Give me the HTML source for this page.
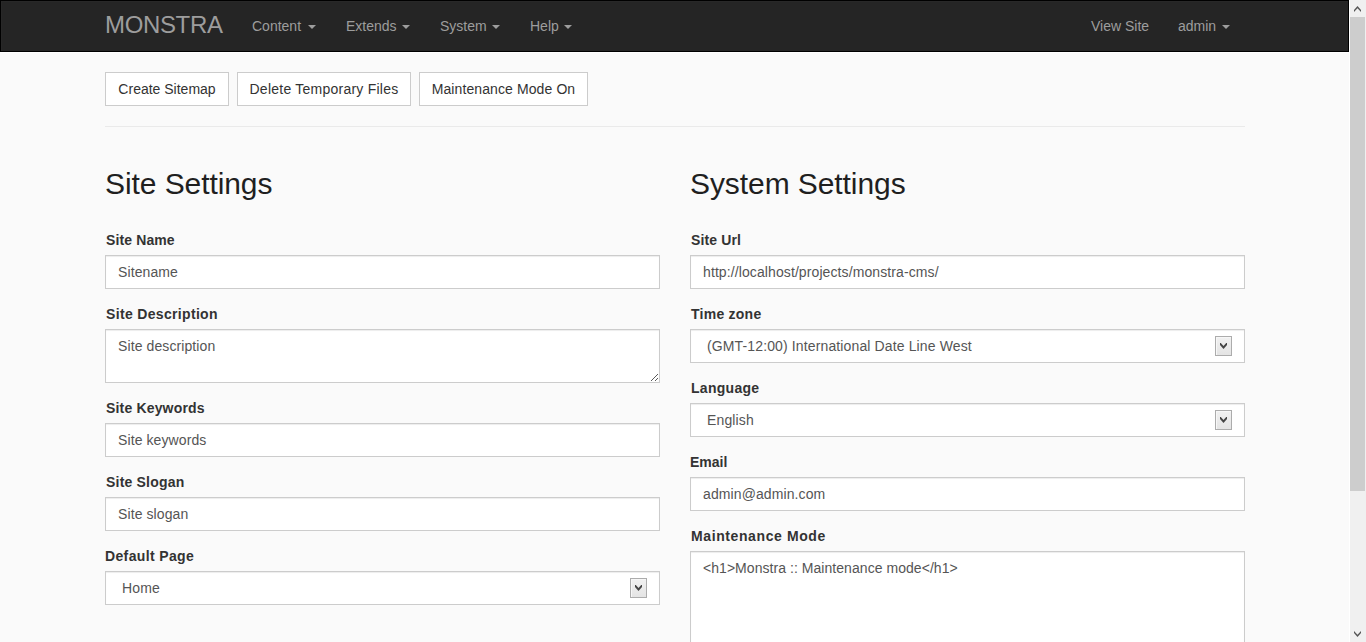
<!DOCTYPE html>
<html>
<head>
<meta charset="utf-8">
<style>
*{box-sizing:border-box;}
html,body{margin:0;padding:0;}
body{width:1366px;height:642px;overflow:hidden;background:#fff;font-family:"Liberation Sans",sans-serif;font-size:14px;line-height:20px;color:#333;position:relative;}
.page{position:absolute;left:0;top:53px;width:1349px;height:589px;background:#fafafa;}
.navbar{position:absolute;left:0;top:0;width:1349px;height:52px;background:#252525;border:1px solid #000;box-shadow:inset 1px 1px 0 #282828;}
.brand{position:absolute;left:104px;top:10px;font-size:24px;line-height:28px;color:#9d9d9d;letter-spacing:-0.35px;}
.nav{position:absolute;top:15px;font-size:14px;line-height:20px;color:#9d9d9d;}
.caret{display:inline-block;width:0;height:0;margin-left:5px;vertical-align:middle;border-top:4px solid #9d9d9d;border-left:4px solid transparent;border-right:4px solid transparent;position:relative;top:0px;}
.abs{position:absolute;}
.btn{position:absolute;top:72px;height:34px;border:1px solid #ccc;background:#fff;color:#333;padding:6px 0;text-align:center;font-size:14px;line-height:20px;white-space:nowrap;}
.hr{position:absolute;left:105px;top:126px;width:1140px;height:1px;background:#eaeaea;}
h2{position:absolute;margin:0;font-size:30px;line-height:33px;font-weight:normal;color:#1f1f1f;letter-spacing:-0.08px;}
.lbl{position:absolute;font-weight:bold;font-size:14px;line-height:20px;color:#333;}
.inp{position:absolute;width:555px;height:34px;border:1px solid #ccc;background:#fff;padding:6px 12px;color:#555;font-size:14px;line-height:20px;white-space:nowrap;letter-spacing:0.1px;box-shadow:inset 0 1px 1px rgba(0,0,0,.075);}
.sel{padding-left:16px;letter-spacing:0.13px;}
.sel .arrow{position:absolute;right:12px;top:6px;width:17px;height:20px;border:1px solid #acacac;background:linear-gradient(#f1f1f1,#e4e4e4);box-shadow:inset 1px 1px 0 #f7f7f7;}
.sel .arrow svg{position:absolute;left:4px;top:6px;}
.grip{position:absolute;right:1px;bottom:1px;}
.scroll{position:absolute;left:1349px;top:0;width:17px;height:642px;background:#f0f0f0;border-left:1px solid #fff;}
.thumb{position:absolute;left:0;top:17px;width:15px;height:474px;background:#cdcdcd;}
.sarrow{position:absolute;left:4px;}
</style>
</head>
<body>
<div class="navbar">
  <div class="brand">MONSTRA</div>
  <div class="nav" style="left:251px">Content<span class="caret" style="margin-left:7px"></span></div>
  <div class="nav" style="left:345px">Extends<span class="caret" ></span></div>
  <div class="nav" style="left:439px">System<span class="caret" ></span></div>
  <div class="nav" style="left:529px">Help<span class="caret" ></span></div>
  <div class="nav" style="left:1090px">View Site</div>
  <div class="nav" style="left:1177px">admin<span class="caret" style="margin-left:6px"></span></div>
</div>

<div class="page">
  <div class="btn" style="left:105px;top:19px;width:124px">Create Sitemap</div>
  <div class="btn" style="left:237px;top:19px;width:174px;letter-spacing:0.24px">Delete Temporary Files</div>
  <div class="btn" style="left:419px;top:19px;width:169px;letter-spacing:0.1px">Maintenance Mode On</div>
  <div class="hr" style="top:73px"></div>

  <h2 style="left:105px;top:114px">Site Settings</h2>
  <h2 style="left:690px;top:114px">System Settings</h2>

  <div class="lbl" style="left:106px;top:177px;letter-spacing:0.12px">Site Name</div>
  <div class="inp" style="left:105px;top:202px">Sitename</div>
  <div class="lbl" style="left:106px;top:251px;letter-spacing:0.33px">Site Description</div>
  <div class="inp" style="left:105px;top:276px;height:54px">Site description<svg style="position:absolute;left:545px;top:44px" width="7" height="7" shape-rendering="crispEdges" fill="#5a5a5a"><rect x="0" y="6" width="1" height="1"/><rect x="1" y="5" width="1" height="1"/><rect x="2" y="4" width="1" height="1"/><rect x="3" y="3" width="1" height="1"/><rect x="4" y="2" width="1" height="1"/><rect x="5" y="1" width="1" height="1"/><rect x="6" y="0" width="1" height="1"/><rect x="4" y="6" width="1" height="1"/><rect x="5" y="5" width="1" height="1"/><rect x="6" y="4" width="1" height="1"/></svg></div>
  <div class="lbl" style="left:106px;top:345px;letter-spacing:0.17px">Site Keywords</div>
  <div class="inp" style="left:105px;top:370px">Site keywords</div>
  <div class="lbl" style="left:106px;top:419px;letter-spacing:0.2px">Site Slogan</div>
  <div class="inp" style="left:105px;top:444px">Site slogan</div>
  <div class="lbl" style="left:105px;top:493px;letter-spacing:0.36px">Default Page</div>
  <div class="inp sel" style="left:105px;top:518px">Home<div class="arrow"><svg width="7" height="6" viewBox="0 0 7 6"><path d="M0 0 L0.8 0 L3.5 3 L6.2 0 L7 0 L7 2 L3.5 6 L0 2 Z" fill="#444"/></svg></div></div>

  <div class="lbl" style="left:691px;top:177px;letter-spacing:0.14px">Site Url</div>
  <div class="inp" style="left:690px;top:202px">http://localhost/projects/monstra-cms/</div>
  <div class="lbl" style="left:691px;top:251px;letter-spacing:0.25px">Time zone</div>
  <div class="inp sel" style="left:690px;top:276px">(GMT-12:00) International Date Line West<div class="arrow"><svg width="7" height="6" viewBox="0 0 7 6"><path d="M0 0 L0.8 0 L3.5 3 L6.2 0 L7 0 L7 2 L3.5 6 L0 2 Z" fill="#444"/></svg></div></div>
  <div class="lbl" style="left:691px;top:325px;letter-spacing:0.29px">Language</div>
  <div class="inp sel" style="left:690px;top:350px">English<div class="arrow"><svg width="7" height="6" viewBox="0 0 7 6"><path d="M0 0 L0.8 0 L3.5 3 L6.2 0 L7 0 L7 2 L3.5 6 L0 2 Z" fill="#444"/></svg></div></div>
  <div class="lbl" style="left:690px;top:399px">Email</div>
  <div class="inp" style="left:690px;top:424px">admin@admin.com</div>
  <div class="lbl" style="left:691px;top:473px;letter-spacing:0.6px">Maintenance Mode</div>
  <div class="inp" style="left:690px;top:498px;height:120px;letter-spacing:0.05px">&lt;h1&gt;Monstra :: Maintenance mode&lt;/h1&gt;</div>
</div>
<div class="scroll">
  <svg class="sarrow" style="top:6px" width="7" height="6" viewBox="0 0 7 6"><path d="M0 4 L3.5 0 L7 4 L7 6 L3.5 2.2 L0 6 Z" fill="#555"/></svg>
  <div class="thumb"></div>
  <svg class="sarrow" style="top:631px" width="7" height="6" viewBox="0 0 7 6"><path d="M0 0 L3.5 3.8 L7 0 L7 2 L3.5 6 L0 2 Z" fill="#555"/></svg>
</div>
</body>
</html>
